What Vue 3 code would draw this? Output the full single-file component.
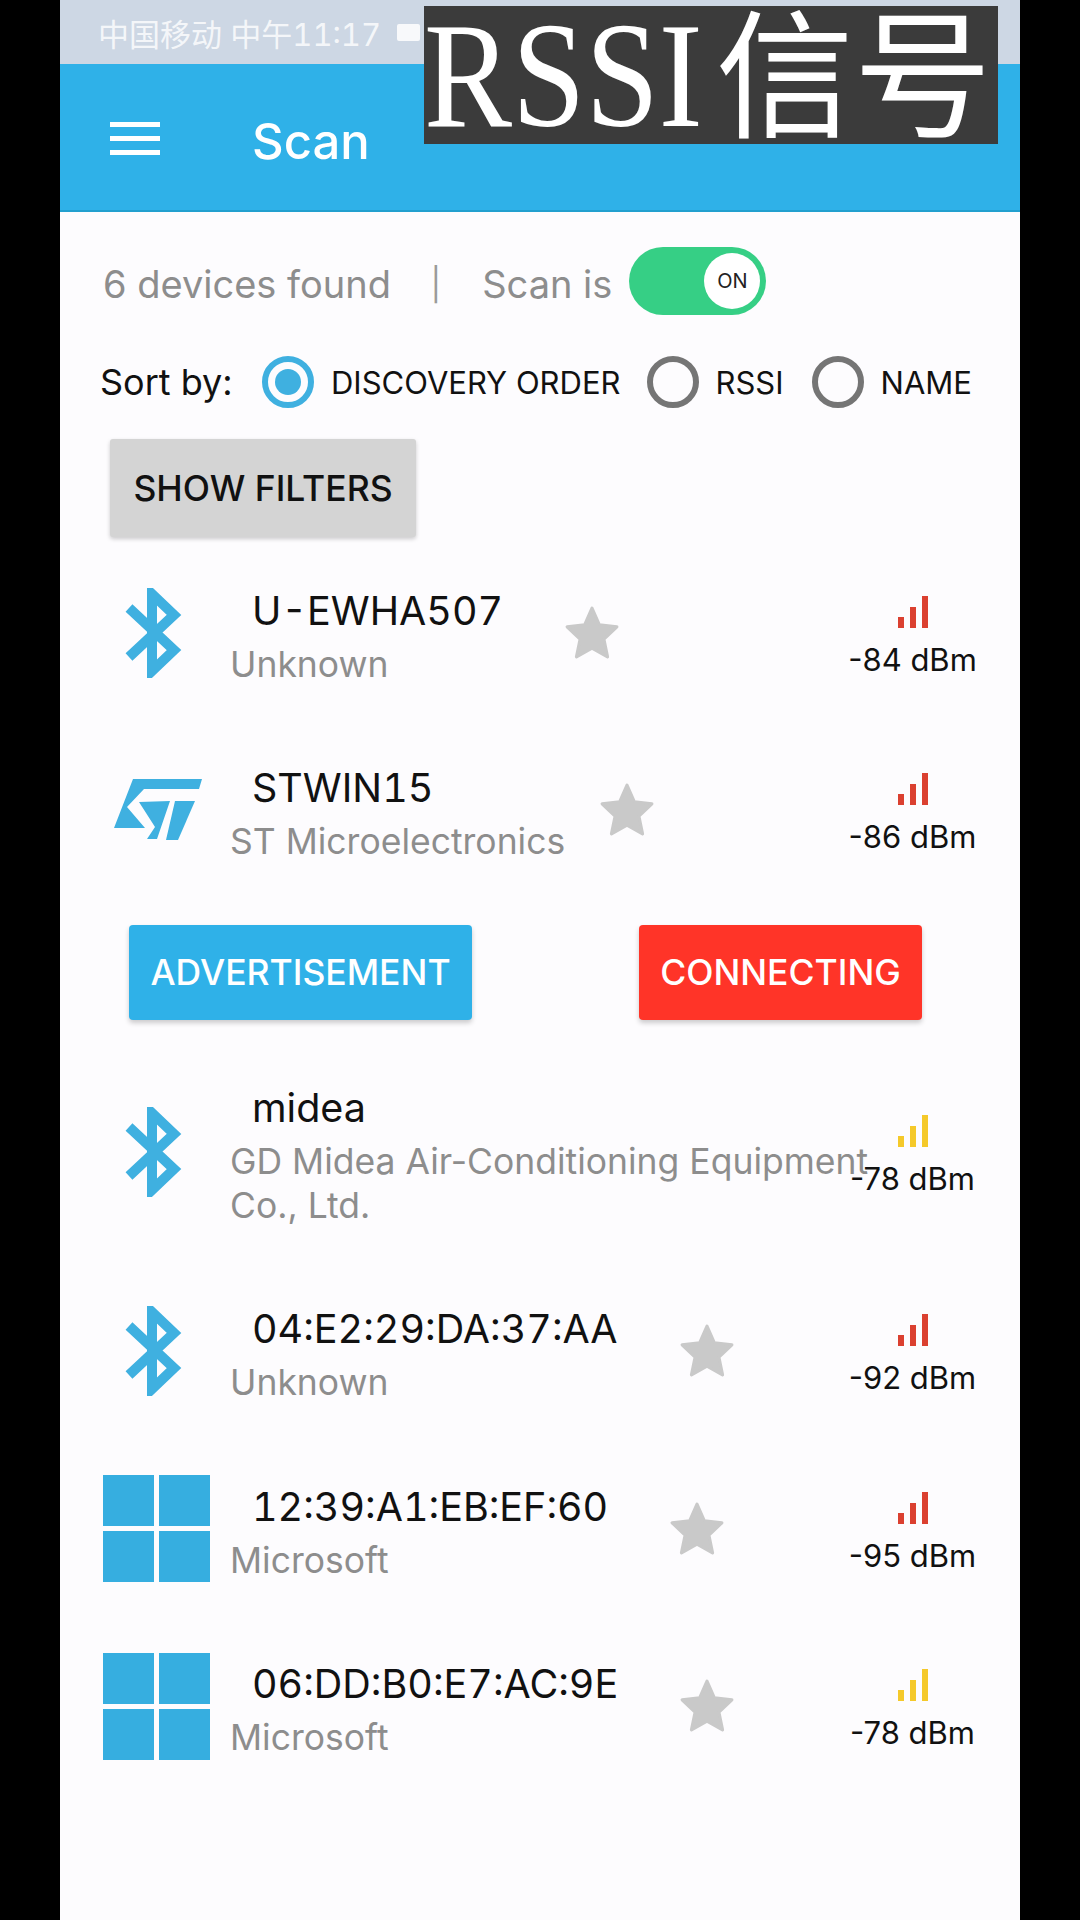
<script setup>
// Devices shown in the scan list
const devices = [
  { name: 'U-EWHA507', vendor: 'Unknown', icon: 'bt', rssi: -84, level: 'weak' },
  { name: 'STWIN15', vendor: 'ST Microelectronics', icon: 'st', rssi: -86, level: 'weak', actions: true },
  { name: 'midea', vendor: 'GD Midea Air-Conditioning Equipment Co., Ltd.', icon: 'bt', rssi: -78, level: 'mid', wide: true },
  { name: '04:E2:29:DA:37:AA', vendor: 'Unknown', icon: 'bt', rssi: -92, level: 'weak' },
  { name: '12:39:A1:EB:EF:60', vendor: 'Microsoft', icon: 'win', rssi: -95, level: 'weak' },
  { name: '06:DD:B0:E7:AC:9E', vendor: 'Microsoft', icon: 'win', rssi: -78, level: 'mid' }
]

const sortOptions = [
  { label: 'DISCOVERY ORDER', checked: true },
  { label: 'RSSI', checked: false },
  { label: 'NAME', checked: false }
]
</script>

<template>
  <div class="screen">
    <div class="status-bar">
      <span>中国移动 中午11:17</span>
      <i class="status-icon"></i>
    </div>

    <header class="app-bar">
      <div class="menu"><i></i><i></i><i></i></div>
      <h1>Scan</h1>
    </header>

    <div class="caption"><span class="caption-latin">RSSI</span><span class="caption-cjk">信号</span></div>

    <section class="scan-state">
      <span>6 devices found</span>
      <span class="divider">|</span>
      <span>Scan is</span>
      <div class="switch"><span class="knob">ON</span></div>
    </section>

    <section class="sort">
      <span class="sort-title">Sort by:</span>
      <label v-for="opt in sortOptions" :key="opt.label" class="radio-item">
        <span class="radio" :class="{ checked: opt.checked }"></span>
        {{ opt.label }}
      </label>
    </section>

    <button class="filters">SHOW FILTERS</button>

    <template v-for="d in devices" :key="d.name">
      <div class="device" :class="{ wide: d.wide }">
        <div class="device-icon">
          <svg v-if="d.icon === 'bt'" class="bt-icon" width="60" height="90" viewBox="0 0 60 90">
            <polyline points="5,20 50,62 28,83 28,6 50,27 5,69" fill="none" stroke="#3fb0e0" stroke-width="10" />
          </svg>
          <svg v-else-if="d.icon === 'st'" class="st-icon" width="88" height="62" viewBox="0 0 88 62">
            <path d="M19 0H88L85 10H30L13 28L31 49H0Z" fill="#3fb0e0" />
            <path d="M25 23L56 22L43 60H33L41 48Z" fill="#3fb0e0" />
            <path d="M61 22H81L64 61H52Z" fill="#3fb0e0" />
          </svg>
          <div v-else class="win-logo"><i></i><i></i><i></i><i></i></div>
        </div>

        <div class="info">
          <div class="name">{{ d.name }}</div>
          <div class="vendor">{{ d.vendor }}</div>
        </div>

        <svg v-if="!d.wide" class="star" width="56" height="56" viewBox="0 0 54 54">
          <path
            d="M27 3L34 19L51 21L38.500 33L42 50L27 41.500L12 50L15.500 33L3 21L20 19Z"
            fill="#c9c9c9" stroke="#c9c9c9" stroke-width="3" stroke-linejoin="round"
          />
        </svg>

        <div class="rssi">
          <div class="bars" :class="d.level"><i></i><i></i><i></i></div>
          <div class="dbm">{{ d.rssi }} dBm</div>
        </div>
      </div>

      <div v-if="d.actions" class="actions">
        <button class="action blue">ADVERTISEMENT</button>
        <button class="action red">CONNECTING</button>
      </div>
    </template>
  </div>
</template>

<style>
html, body {
  background: #000;
}
</style>

<style scoped>
.screen {
  position: relative;
  width: 960px;
  height: 1920px;
  margin-left: 60px;
  overflow: hidden;
  background: #fdfcfe;
  font-family: Inter, "Noto Sans CJK SC", sans-serif;
  color: #111;
}

.status-bar {
  display: flex;
  align-items: center;
  gap: 16px;
  height: 64px;
  padding-left: 38px;
  box-sizing: border-box;
  background: #cdd7e4;
  color: rgba(255, 255, 255, 0.8);
  font-size: 31px;
  font-variant-numeric: tabular-nums;
}

.status-icon {
  width: 23px;
  height: 17px;
  border-radius: 2px;
  background: rgba(255, 255, 255, 0.85);
}

.app-bar {
  display: flex;
  align-items: center;
  height: 148px;
  padding-left: 50px;
  box-sizing: border-box;
  background: #2fb1e8;
  border-bottom: 2px solid #22a0cf;
  color: #fff;
}

.app-bar h1 {
  margin: 8px 0 0 92px;
  font-size: 49px;
  font-weight: 500;
}

.menu {
  display: flex;
  flex-direction: column;
  gap: 9px;
  width: 50px;
  padding-top: 2px;
}

.menu i {
  height: 5px;
  background: #fff;
}

.caption {
  position: absolute;
  left: 364px;
  top: 6px;
  width: 574px;
  height: 138px;
  background: #3b3b3b;
  color: #fff;
  font-family: "Liberation Serif", "Noto Sans CJK SC", serif;
  font-size: 150px;
  line-height: 138px;
  white-space: nowrap;
}

.caption-latin {
  display: inline-block;
  margin-right: -25px;
  transform: scaleX(0.88);
  transform-origin: left;
}

.caption-cjk {
  font-size: 138px;
}

.scan-state {
  display: flex;
  align-items: center;
  height: 68px;
  margin-top: 35px;
  padding-left: 43px;
  color: #8d8d8d;
  font-size: 38px;
}

.scan-state > span {
  padding-top: 6px;
}

.scan-state > .divider {
  margin: 0 41px 0 39.5px;
  color: #9a9a9a;
  font-size: 32px;
}

.switch {
  display: flex;
  align-items: center;
  justify-content: flex-end;
  width: 137px;
  height: 68px;
  margin-left: 17px;
  padding-right: 6px;
  box-sizing: border-box;
  border-radius: 34px;
  background: #36cf85;
}

.knob {
  display: flex;
  align-items: center;
  justify-content: center;
  width: 56px;
  height: 56px;
  border-radius: 50%;
  background: #fff;
  color: #222;
  font-size: 20px;
}

.sort {
  display: flex;
  align-items: center;
  height: 52px;
  margin-top: 41px;
  padding-left: 40px;
  font-size: 36px;
}

.sort-title {
  width: 162px;
}

.radio-item {
  display: flex;
  align-items: center;
  gap: 17px;
  margin-right: 26px;
  font-size: 31px;
}

.radio-item:nth-of-type(2) {
  margin-right: 28px;
}

.radio {
  position: relative;
  width: 52px;
  height: 52px;
  box-sizing: border-box;
  border: 6px solid #757575;
  border-radius: 50%;
}

.radio.checked {
  border-color: #3fb0e0;
}

.radio.checked::after {
  content: "";
  position: absolute;
  inset: 7px;
  border-radius: 50%;
  background: #3fb0e0;
}

.filters {
  display: block;
  width: 306px;
  height: 98px;
  margin: 31px 0 7px 50px;
  padding: 0;
  border: none;
  border-radius: 3px;
  background: #d4d4d4;
  box-shadow: 0 2px 4px rgba(0, 0, 0, 0.2);
  color: #111;
  font-family: inherit;
  font-size: 35.5px;
  font-weight: 500;
}

.device {
  display: flex;
  align-items: center;
  padding: 34.75px 44px 34.75px 40px;
}

.device-icon {
  display: flex;
  align-items: center;
  justify-content: center;
  flex: none;
  width: 112px;
  margin-right: 18px;
}

.bt-icon {
  margin-left: -5px;
}

.st-icon {
  margin-left: 3px;
}

.info {
  flex: none;
}

.device.wide .info {
  flex: none;
  width: 680px;
  margin-right: -200px;
}

.name {
  padding: 0 27px 0 22px;
  font-size: 39.5px;
  font-variant-numeric: tabular-nums;
  line-height: 64px;
}

.vendor {
  color: #8d8d8d;
  font-size: 35.5px;
  line-height: 44px;
}

.star {
  flex: none;
  margin-left: 34px;
}

.rssi {
  display: flex;
  flex-direction: column;
  align-items: center;
  width: 127px;
  margin-left: auto;
  padding-top: 8px;
}

.bars {
  display: flex;
  align-items: flex-end;
  gap: 6px;
  height: 32px;
}

.bars i {
  width: 6px;
  background: #db4030;
}

.bars.mid i {
  background: #f5c92a;
}

.bars i:nth-child(1) { height: 11px; }
.bars i:nth-child(2) { height: 21px; }
.bars i:nth-child(3) { height: 32px; }

.dbm {
  margin-top: 14px;
  font-size: 31px;
  line-height: 36px;
  white-space: nowrap;
}

.win-logo {
  display: grid;
  grid-template-columns: 51px 51px;
  grid-auto-rows: 51px;
  gap: 5px;
}

.win-logo i {
  background: #36aee0;
}

.actions {
  display: flex;
  gap: 167px;
  margin: 26px 0 21px;
  padding-left: 69px;
}

.action {
  height: 95px;
  padding: 0;
  border: none;
  border-radius: 4px;
  box-shadow: 0 3px 5px rgba(0, 0, 0, 0.2);
  color: #fff;
  font-family: inherit;
  font-size: 35.5px;
  font-weight: 500;
}

.action.blue {
  width: 343px;
  background: #2fb1e8;
}

.action.red {
  width: 283px;
  background: #ff3428;
}
</style>
